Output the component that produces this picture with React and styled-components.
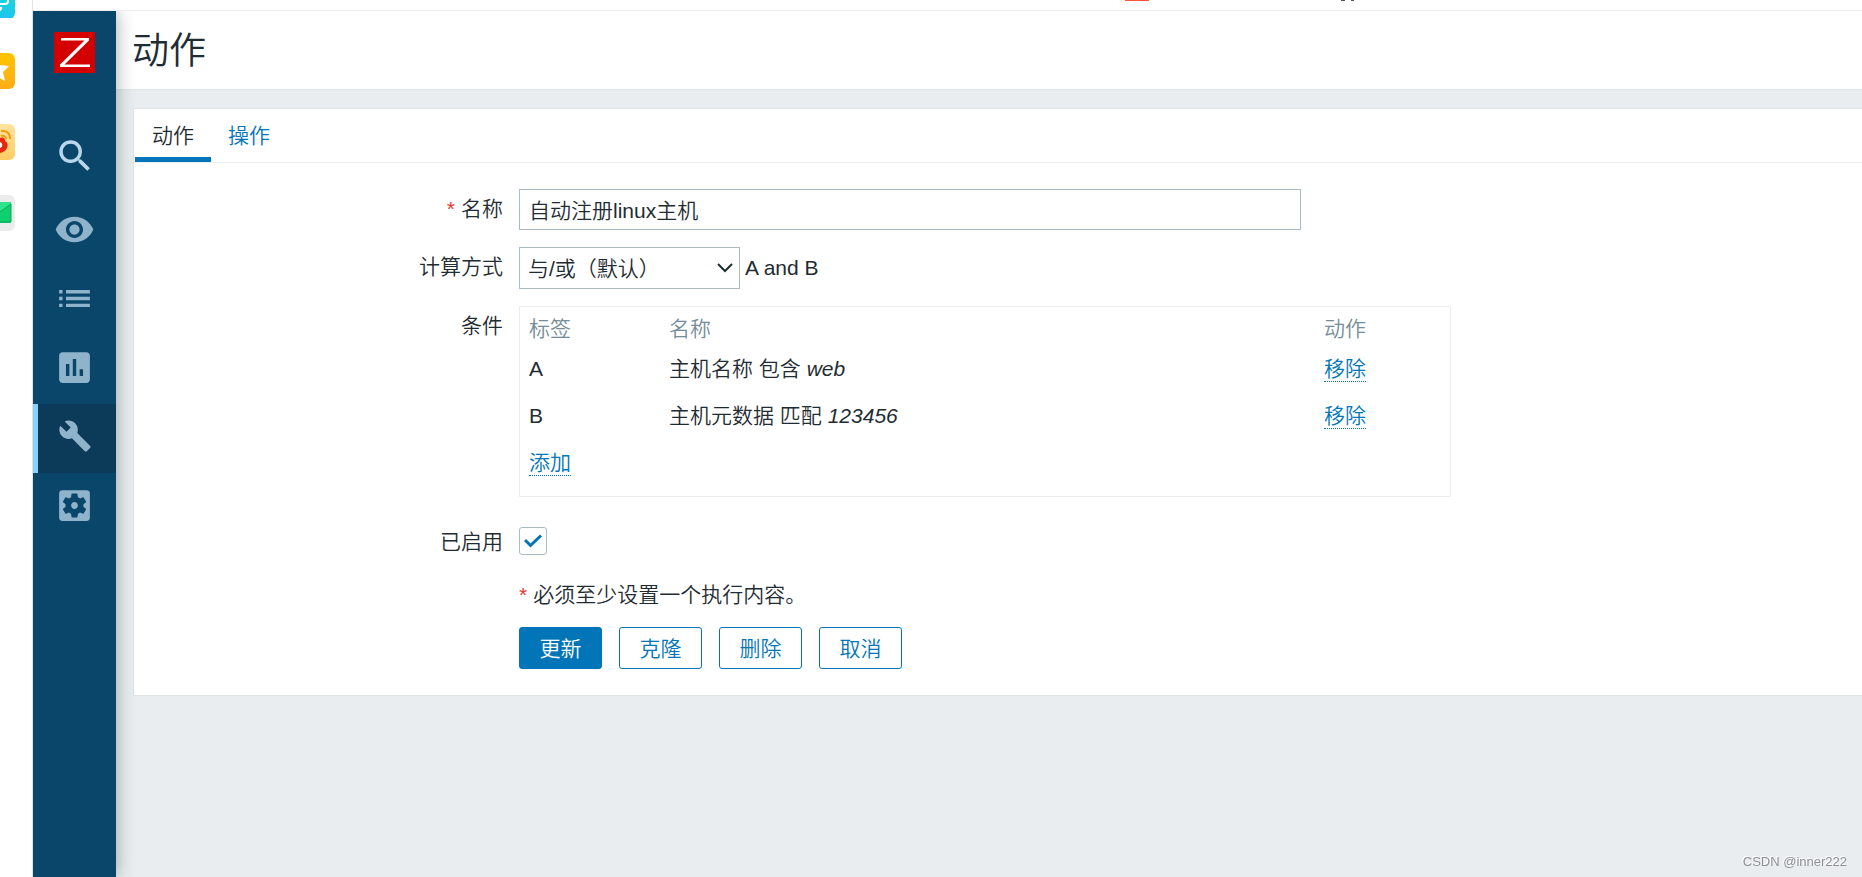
import React from "react";
import styled, { createGlobalStyle } from "styled-components";
import {
  MdSearch,
  MdVisibility,
  MdList,
  MdAssessment,
  MdBuild,
  MdSettingsApplications,
} from "react-icons/md";

const font = `"Liberation Sans", "Noto Sans CJK SC", sans-serif`;

const GlobalStyle = createGlobalStyle`
  *, *::before, *::after { box-sizing: border-box; }
  body {
    margin: 0;
    background: #fff;
    color: #1f2c33;
    font-family: ${font};
    font-size: 21px;
    font-weight: 350;
    line-height: 24px;
  }
  button, input, select { font: inherit; color: inherit; }
`;

const Screen = styled.div`
  display: grid;
  grid-template-columns: 33px minmax(0, 1fr);
  min-height: 100vh;
  overflow: hidden;
`;

const Dock = styled.div`
  display: flex;
  flex-direction: column;
  gap: 35px;
  border-right: 1px solid #e2e2e2;
  height: 100vh;
  overflow: hidden;

  svg { display: block; flex: none; }
  svg:first-child { margin-top: -18px; }
`;

const Window = styled.div`
  display: flex;
  flex-direction: column;
`;

const BrowserBar = styled.div`
  flex: none;
  height: 11px;
  border-bottom: 1px solid #eee;

  svg { display: block; margin-left: auto; margin-right: 508px; }
`;

const Page = styled.div`
  flex: 1;
  display: flex;
`;

const Sidebar = styled.aside`
  position: relative;
  z-index: 1;
  flex: none;
  width: 83px;
  background: #0a466a;
  box-shadow: 0 0 17px rgba(31, 44, 51, 0.4);
  clip-path: inset(0 -20px 0 0);
  display: flex;
  flex-direction: column;
  align-items: stretch;
`;

const Logo = styled.a`
  align-self: center;
  margin-top: 21px;
  height: 41px;
  svg { display: block; }
`;

const SearchButton = styled.button`
  margin-top: 48px;
  height: 69px;
  padding: 0;
  border: 0;
  background: none;
  color: #b9d7ea;
  display: grid;
  place-items: center;
`;

const Nav = styled.nav`
  display: flex;
  flex-direction: column;
  margin-top: 7px;
`;

const NavLink = styled.a`
  height: 69px;
  padding-bottom: 5px;
  display: grid;
  place-items: center;
  color: #8fb3cb;
  background: ${(p) => (p.$active ? "#0b3b59" : "none")};
  box-shadow: ${(p) => (p.$active ? "inset 5px 0 #87d0ff" : "none")};
`;

const Main = styled.main`
  flex: 1;
  min-width: 0;
  background: #e9edf0;
`;

const Header = styled.header`
  height: 79px;
  padding: 4px 16px 0;
  background: #fff;
  border-bottom: 1px solid #dfe4e7;
  display: flex;
  align-items: center;
`;

const Title = styled.h1`
  margin: 0;
  font-size: 37px;
  line-height: 48px;
  font-weight: 350;
`;

const Panel = styled.section`
  margin: 18px 0 0 17px;
  background: #fff;
  border: 1px solid #dfe4e7;
  border-right: 0;
`;

const Tabs = styled.nav`
  display: flex;
  height: 54px;
  padding-left: 1px;
  border-bottom: 1px solid #ebeef0;
`;

const Tab = styled.a`
  padding: 15px 17px 0;
  color: ${(p) => (p.$active ? "#1f2c33" : "#0275b8")};
  border-bottom: 5px solid ${(p) => (p.$active ? "#0275b8" : "transparent")};
  text-decoration: none;
`;

const Form = styled.form`
  display: grid;
  grid-template-columns: 369px minmax(0, 932px);
  column-gap: 16px;
  row-gap: 17px;
  padding: 26px 0;
`;

const Label = styled.label`
  text-align: right;
  padding-top: ${(p) => (p.$check ? 16 : 8)}px;
`;

const Required = styled.span`
  color: #e33734;
  margin-right: 6px;
`;

const Field = styled.div`
  grid-column: 2;
  display: flex;
  align-items: center;
  gap: ${(p) => p.$gap || 0}px;
`;

const CheckField = styled(Field)`
  padding-top: 13px;
`;

const Hint = styled(Field)`
  height: 38px;
  padding-top: 8px;
`;

const TextInput = styled.input`
  width: 782px;
  max-width: 100%;
  height: 41px;
  padding: 0 9px 2px;
  border: 1px solid #acbbc2;
  background: #fff;
`;

const SelectBox = styled.div`
  position: relative;
  svg {
    position: absolute;
    right: 7px;
    top: 15px;
    pointer-events: none;
  }
`;

const Select = styled.select`
  display: block;
  appearance: none;
  width: 221px;
  height: 42px;
  padding: 2px 8px 0;
  border: 1px solid #acbbc2;
  border-radius: 0;
  background: #fff;
`;

const TableBox = styled.div`
  flex: 1;
  height: 191px;
  border: 1px solid #ebeef0;
`;

const Table = styled.table`
  width: 100%;
  border-collapse: collapse;
  table-layout: fixed;

  th, td {
    padding: 10px 0 0 9px;
    text-align: left;
    vertical-align: top;
    font-weight: 350;
  }
  th { color: #768d99; height: 40px; }
  td { height: 47px; }
  th:nth-child(1) { width: 140px; }
  th:nth-child(3) { width: 135px; }
`;

const LinkButton = styled.button`
  padding: 0;
  border: 0;
  border-bottom: 1px dotted #0275b8;
  background: none;
  color: #0275b8;
  line-height: 24px;
  vertical-align: top;
`;

const CheckWrap = styled.span`
  display: grid;
  width: 28px;
  height: 28px;
  > * { grid-area: 1 / 1; }
  svg { place-self: center; pointer-events: none; }
`;

const Checkbox = styled.input`
  appearance: none;
  margin: 0;
  width: 28px;
  height: 28px;
  border: 1px solid #acbbc2;
  border-radius: 3px;
  background: #fff;
`;

const Button = styled.button`
  height: 42px;
  width: 83px;
  padding: 2px 0 0;
  border: 1px solid #0275b8;
  border-radius: 3px;
  background: ${(p) => (p.$primary ? "#0275b8" : "#fff")};
  color: ${(p) => (p.$primary ? "#fff" : "#0275b8")};
`;

const Watermark = styled.div`
  position: fixed;
  right: 15px;
  bottom: 6px;
  z-index: 2;
  font-size: 13px;
  line-height: 18px;
  color: #8e9193;
  text-shadow: -1px -1px #fff;
`;

const navItems = [
  ["监测", MdVisibility, 41],
  ["资产记录", MdList, 41],
  ["报表", MdAssessment, 41],
  ["配置", MdBuild, 34],
  ["管理", MdSettingsApplications, 41],
];

const conditions = [
  ["A", "主机名称 包含", "web"],
  ["B", "主机元数据 匹配", "123456"],
];

function DockIcons() {
  return (
    <Dock aria-hidden="true">
      <svg width="15" height="36" viewBox="0 0 15 36">
        <defs>
          <linearGradient id="cyan" x2="0" y2="1"><stop stopColor="#12e0d0" /><stop offset="1" stopColor="#22c4f0" /></linearGradient>
          <linearGradient id="amber" x2="0" y2="1"><stop stopColor="#ffc400" /><stop offset="1" stopColor="#ffad17" /></linearGradient>
          <linearGradient id="sand" x2="0" y2="1"><stop stopColor="#ffe3a0" /><stop offset="1" stopColor="#ffcc62" /></linearGradient>
        </defs>
        <rect x="-21" width="36" height="37" rx="6" fill="url(#cyan)" />
        <path d="M0 22H5Q8 22 8 19V17M0 28Q1 28 1 25" fill="none" stroke="#fff" strokeWidth="2" />
      </svg>
      <svg width="15" height="36" viewBox="0 0 15 36">
        <rect x="-21" width="36" height="36" rx="6" fill="url(#amber)" />
        <path d="M-4 4L0 12L9 13L3 19L5 28L-4 23Z" fill="#fff" />
      </svg>
      <svg width="15" height="36" viewBox="0 0 15 36">
        <rect x="-21" width="36" height="36" rx="6" fill="url(#sand)" />
        <path d="M0 14Q5 12 5 17Q9 19 7 24Q5 28 0 29Z" fill="#e8260c" />
        <path d="M0 18Q3 19 2 23L0 24Z" fill="#fff" />
        <path d="M1 7Q10 6 10 15M1 12Q6 11 6 15" fill="none" stroke="#f39a12" strokeWidth="2" />
      </svg>
      <svg width="15" height="36" viewBox="0 0 15 36">
        <rect x="-21" width="36" height="36" rx="6" fill="#ececec" />
        <rect x="-10" y="7" width="21" height="21" rx="1" fill="#10cf71" />
        <path d="M0 7H11V9L0 17Z" fill="#2fe38c" />
        <path d="M0 17L11 9V27H0" stroke="#0aa65a" fill="none" />
      </svg>
    </Dock>
  );
}

export default function App() {
  return (
    <>
      <GlobalStyle />
      <Screen>
        <DockIcons />
        <Window>
          <BrowserBar aria-hidden="true">
            <svg width="229" height="1"><path d="M0 .5h24" stroke="#ff5533" /><path d="M216 .5h4M226 .5h3" stroke="#555" /></svg>
          </BrowserBar>
          <Page>
            <Sidebar>
              <Logo href="#" aria-label="Zabbix">
                <svg width="41" height="41" viewBox="0 0 41 41">
                  <rect width="41" height="41" fill="#d40000" />
                  <path d="M7 6H35V8.500L10.500 32.500H36V35H6V32.500L30.500 8.500H7Z" fill="#fff" />
                </svg>
              </Logo>
              <SearchButton type="button" aria-label="搜索"><MdSearch size={42} /></SearchButton>
              <Nav>
                {navItems.map(([name, Icon, size]) => (
                  <NavLink key={name} href="#" aria-label={name} $active={name === "配置"}>
                    <Icon size={size} />
                  </NavLink>
                ))}
              </Nav>
            </Sidebar>
            <Main>
              <Header><Title>动作</Title></Header>
              <Panel>
                <Tabs>
                  <Tab href="#action" $active>动作</Tab>
                  <Tab href="#operations">操作</Tab>
                </Tabs>
                <Form onSubmit={(e) => e.preventDefault()}>
                  <Label htmlFor="name"><Required>*</Required>名称</Label>
                  <Field><TextInput id="name" defaultValue="自动注册linux主机" /></Field>

                  <Label htmlFor="evaltype">计算方式</Label>
                  <Field $gap={5}>
                    <SelectBox>
                      <Select id="evaltype"><option>与/或（默认）</option></Select>
                      <svg width="16" height="12" viewBox="0 0 16 12"><path d="M1 2L8 9L15 2" fill="none" stroke="#1f2c33" strokeWidth="2" /></svg>
                    </SelectBox>
                    <span>A and B</span>
                  </Field>

                  <Label as="div">条件</Label>
                  <Field>
                    <TableBox>
                      <Table>
                        <thead><tr><th>标签</th><th>名称</th><th>动作</th></tr></thead>
                        <tbody>
                          {conditions.map(([tag, text, value]) => (
                            <tr key={tag}>
                              <td>{tag}</td>
                              <td>{text} <em>{value}</em></td>
                              <td><LinkButton type="button">移除</LinkButton></td>
                            </tr>
                          ))}
                          <tr><td colSpan={3}><LinkButton type="button">添加</LinkButton></td></tr>
                        </tbody>
                      </Table>
                    </TableBox>
                  </Field>

                  <Label htmlFor="enabled" $check>已启用</Label>
                  <CheckField>
                    <CheckWrap>
                      <Checkbox id="enabled" type="checkbox" defaultChecked />
                      <svg width="18" height="14" viewBox="0 0 18 14"><path d="M1 6L6.500 11.500L17 1.500" fill="none" stroke="#0275b8" strokeWidth="3" /></svg>
                    </CheckWrap>
                  </CheckField>

                  <Hint><span><Required>*</Required>必须至少设置一个执行内容。</span></Hint>
                  <Field $gap={17}>
                    <Button $primary type="submit">更新</Button>
                    <Button type="button">克隆</Button>
                    <Button type="button">删除</Button>
                    <Button type="button">取消</Button>
                  </Field>
                </Form>
              </Panel>
            </Main>
          </Page>
        </Window>
      </Screen>
      <Watermark>CSDN @inner222</Watermark>
    </>
  );
}
